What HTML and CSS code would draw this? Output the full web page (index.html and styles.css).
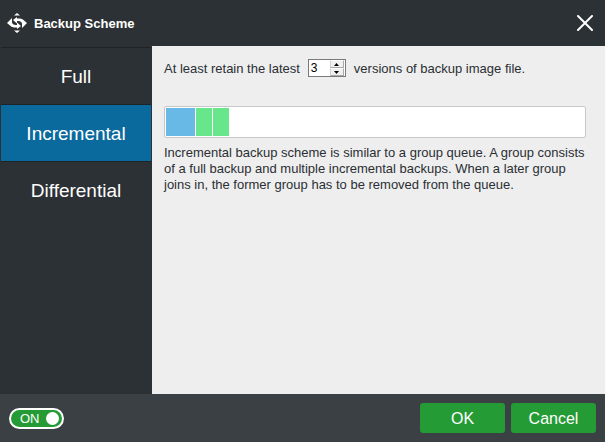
FILE: index.html
```
<!DOCTYPE html>
<html lang="en">
  <head>
    <meta charset="UTF-8" />
    <meta name="viewport" content="width=device-width, initial-scale=1.0" />
    <title>Backup Scheme</title>
    <link rel="stylesheet" href="styles.css">
  </head>
  <body>
    <div class="dialog">
      <header class="titlebar">
        <svg class="titlebar__logo" width="20" height="20" viewBox="0 0 20 20" fill="#fff" aria-hidden="true">
          <path d="M10 0l3 2.500H7zM10 20l3-2.500H7z" />
          <path d="M0 10L5 5V9C5 11 6.500 12 9 12H10V9.500L14 13L10 16V14.500H8C6.500 14.500 5.500 14.200 4.500 13.800Z" />
          <path d="M20 10L15 15V11C15 9 13.500 8 11 8H10V10.500L6 7L10 4V5.500H12C13.500 5.500 14.500 5.800 15.500 6.200Z" />
        </svg>
        <h1 class="titlebar__title">Backup Scheme</h1>
        <button type="button" class="titlebar__close" aria-label="Close">
          <svg width="16" height="16" viewBox="0 0 16 16" stroke="#fff" stroke-width="2" stroke-linecap="round">
            <path d="M1 1l14 14M15 1L1 15" />
          </svg>
        </button>
      </header>

      <div class="main">
        <nav class="tabs">
          <button type="button" class="tab">Full</button>
          <button type="button" class="tab tab--active">Incremental</button>
          <button type="button" class="tab">Differential</button>
        </nav>

        <section class="content">
          <div class="retain">
            <label for="versions">At least retain the latest</label>
            <div class="spinner">
              <input id="versions" class="spinner__input" type="number" min="1" value="3" />
              <div class="spinner__buttons">
                <button type="button" class="spinner__button" id="versions-up" aria-label="More">
                  <svg width="5" height="3" viewBox="0 0 5 3"><path d="M0 3h5L2.500 0z" /></svg>
                </button>
                <button type="button" class="spinner__button" id="versions-down" aria-label="Less">
                  <svg width="5" height="3" viewBox="0 0 5 3"><path d="M0 0h5L2.500 3z" /></svg>
                </button>
              </div>
            </div>
            <span>versions of backup image file.</span>
          </div>

          <div class="queue">
            <div class="queue__full"></div>
            <div class="queue__part"></div>
            <div class="queue__part"></div>
          </div>

          <p class="description">
            Incremental backup scheme is similar to a group queue. A group consists of a full backup and multiple incremental backups. When a later group joins in, the former group has to be removed from the queue.
          </p>
        </section>
      </div>

      <footer class="footer">
        <label class="switch">
          <input type="checkbox" class="switch__input" aria-label="Enable backup scheme" checked />
          <span class="switch__text">ON</span>
          <span class="switch__knob"></span>
        </label>
        <button type="button" class="button">OK</button>
        <button type="button" class="button">Cancel</button>
      </footer>
    </div>

    <script>
      const versions = document.getElementById("versions");

      document.getElementById("versions-up").addEventListener("click", function () {
        versions.stepUp();
      });

      document.getElementById("versions-down").addEventListener("click", function () {
        versions.stepDown();
      });
    </script>
  </body>
</html>
```
FILE: styles.css
```
* {
  padding: 0;
  margin: 0;
  box-sizing: border-box;
}

body,
button,
input {
  font-family: "Liberation Sans", Arial, sans-serif;
  font-size: 13px;
}

button {
  border: none;
  cursor: pointer;
}

.dialog {
  min-height: 100vh;
  display: flex;
  flex-direction: column;
  background: #eeeeee;
  color: #2b2f33;
}

.titlebar {
  height: 46px;
  padding: 0 12px 0 7px;
  display: flex;
  align-items: center;
  gap: 7px;
  background: #2c3135;
  color: #ffffff;
}

.titlebar__title {
  flex: 1;
  font-size: 13px;
  font-weight: 700;
}

.titlebar__close {
  display: flex;
  background: none;
}

.main {
  flex: 1;
  display: flex;
}

.tabs {
  width: 152px;
  padding: 1px;
  display: flex;
  flex-direction: column;
  background: #2c3135;
}

.tab {
  height: 57px;
  padding-top: 2px;
  border-top: 1px solid #1f2326;
  background: none;
  color: #ffffff;
  font-size: 19px;
}

.tab--active {
  height: 58px;
  border-bottom: 1px solid #1f2326;
  background: #0b6a9d;
}

.tab--active + .tab {
  height: 56px;
  border-top: none;
}

.content {
  flex: 1;
  padding: 13px 12px;
}

.retain {
  display: flex;
  align-items: center;
  gap: 8px;
}

.spinner {
  width: 38px;
  height: 18px;
  display: flex;
  border: 1px solid #7a7a7a;
  background: #ffffff;
}

.spinner__input {
  flex: 1;
  min-width: 0;
  padding-left: 2px;
  border: none;
  outline: none;
  background: none;
  color: #000000;
  font-size: 12px;
  appearance: textfield;
}

.spinner__input::-webkit-inner-spin-button {
  appearance: none;
}

.spinner__buttons {
  width: 15px;
  padding-right: 1px;
  display: flex;
  flex-direction: column;
}

.spinner__button {
  flex: 1;
  display: flex;
  justify-content: center;
  align-items: center;
  border: 1px solid #a9a9a9;
  border-top-color: #ffffff;
  border-left-color: #d0d0d0;
  background: #f0f0f0;
}

.queue {
  height: 32px;
  margin: 29px 7px 7px 0;
  padding: 1px;
  display: flex;
  gap: 1px;
  border: 1px solid #c8c8c8;
  border-radius: 2px;
  background: #ffffff;
}

.queue__full {
  width: 29px;
  background: #68b9e6;
}

.queue__part {
  width: 16px;
  background: #68e68c;
}

.description {
  line-height: 16px;
}

.footer {
  height: 48px;
  padding: 0 9px;
  display: flex;
  align-items: center;
  gap: 6px;
  background: #3a4043;
}

.switch {
  width: 55px;
  height: 21px;
  margin-right: auto;
  padding: 0 3px 0 9px;
  display: flex;
  justify-content: space-between;
  align-items: center;
  position: relative;
  border: 2px solid #ffffff;
  border-radius: 11px;
  background: #259b35;
  color: #ffffff;
  cursor: pointer;
}

.switch__input {
  position: absolute;
  opacity: 0;
}

.switch__knob {
  width: 13px;
  height: 13px;
  border-radius: 50%;
  background: #ffffff;
}

.button {
  width: 85px;
  height: 30px;
  padding-top: 1px;
  border-radius: 3px;
  background: #259b35;
  color: #ffffff;
  font-size: 16px;
}
```
